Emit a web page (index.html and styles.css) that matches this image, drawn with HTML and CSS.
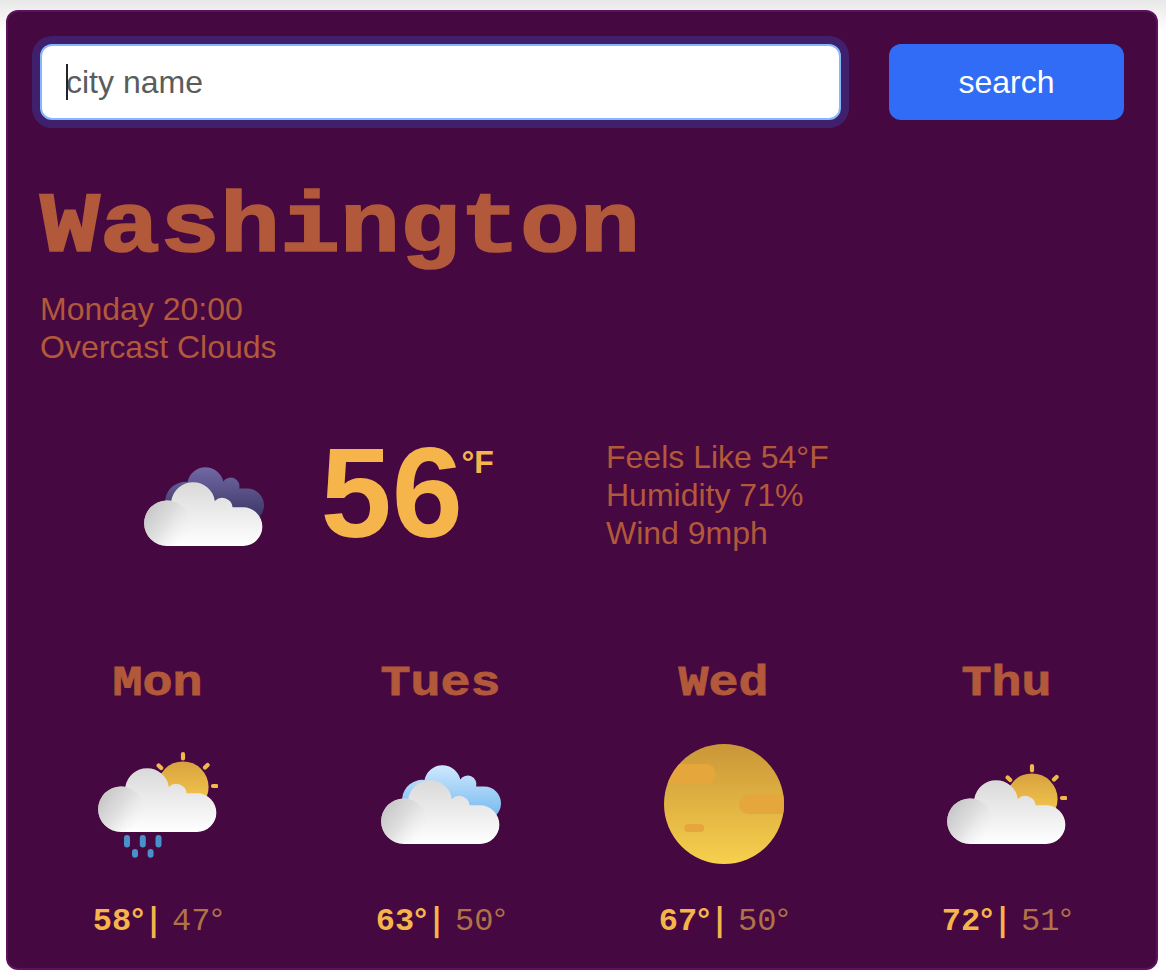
FILE: index.html
```html
<!DOCTYPE html>
<html lang="en">
<head>
<meta charset="utf-8">
<title>Weather</title>
<link rel="stylesheet" href="styles.css">
</head>
<body>
<svg class="defs" width="0" height="0" aria-hidden="true">
  <defs>
    <linearGradient id="cloudFill" x1="0" y1="0" x2="0" y2="1"><stop offset="0" stop-color="#d9d9d9"/><stop offset="1" stop-color="#ffffff"/></linearGradient>
    <linearGradient id="puffFill" x1="0.1" y1="0.15" x2="0.95" y2="0.7"><stop offset="0" stop-color="#c6c6c6"/><stop offset="0.5" stop-color="#d8d8d8" stop-opacity="0.7"/><stop offset="1" stop-color="#efefef" stop-opacity="0"/></linearGradient>
    <linearGradient id="nightFill" x1="0" y1="0" x2="0" y2="1"><stop offset="0" stop-color="#7268a6"/><stop offset="1" stop-color="#37325f"/></linearGradient>
    <linearGradient id="blueFill" x1="0" y1="0" x2="0" y2="1"><stop offset="0" stop-color="#cfe8fe"/><stop offset="1" stop-color="#6fb6ee"/></linearGradient>
    <linearGradient id="sunFill" x1="0" y1="0" x2="0" y2="1"><stop offset="0" stop-color="#d8a140"/><stop offset="1" stop-color="#fbd34f"/></linearGradient>
    <linearGradient id="moonFill" x1="0" y1="0" x2="0" y2="1"><stop offset="0" stop-color="#ca9638"/><stop offset="1" stop-color="#f7d04d"/></linearGradient>
    <clipPath id="moonClip"><circle cx="60" cy="60" r="60"/></clipPath>
    <g id="cloud">
      <path fill="url(#cloudFill)" d="M23 100A22.8 22.8 0 0 1 23 54.4L27.3 54.8A22 22 0 0 1 70.8 55A10.4 10.4 0 0 1 88.6 61.3H99A19.35 19.35 0 0 1 99 100Z"/>
      <circle cx="23" cy="77.2" r="22.8" fill="url(#puffFill)"/>
    </g>
    <path id="back" d="M39 76A19.5 19.5 0 1 1 43.5 36A18.3 18.3 0 0 1 79.3 35.6A8.8 8.8 0 0 1 95.2 42.6H103.3A16.7 16.7 0 0 1 103.3 76Z"/>
    <g id="sun">
      <circle cx="85" cy="55" r="25.6" fill="url(#sunFill)"/>
      <path d="M85 22.2V26.4M107 35.6L109.6 33M115 54H118.4M60.6 33.4L63.2 36" stroke="#f1b94b" stroke-width="4.2" stroke-linecap="round" fill="none"/>
    </g>
  </defs>
</svg>
<main class="card">
  <form class="search">
    <div class="field">
      <input class="city-input" type="text" placeholder="city name" aria-label="City name">
      <span class="caret"></span>
    </div>
    <button class="search-button" type="button">search</button>
  </form>
  <h1 class="city">Washington</h1>
  <div class="summary">Monday 20:00<br>Overcast Clouds</div>
  <section class="current">
    <svg class="icon current-icon" viewBox="0 0 120 120"><use href="#back" fill="url(#nightFill)"/><use href="#cloud"/></svg>
    <div class="temperature">56<span class="unit">°F</span></div>
    <div class="details">Feels Like 54°F<br>Humidity 71%<br>Wind 9mph</div>
  </section>
  <section class="forecast">
    <article class="day">
      <h2 class="day-name">Mon</h2>
      <svg class="icon" viewBox="0 0 120 120"><g transform="translate(0 -12)"><use href="#sun"/><use href="#cloud"/></g><path d="M29 94V100.5M44.8 94V100.5M60.5 94V100.5M37 108V110.7M52.6 108V110.7" stroke="#4a90ca" stroke-width="6" stroke-linecap="round"/></svg>
      <div class="range"><span class="high">58<span class="deg">°</span><span class="bar">|</span></span><span class="deg"> </span><span class="low">47<span class="deg">°</span></span></div>
    </article>
    <article class="day">
      <h2 class="day-name">Tues</h2>
      <svg class="icon" viewBox="0 0 120 120"><use href="#back" fill="url(#blueFill)"/><use href="#cloud"/></svg>
      <div class="range"><span class="high">63<span class="deg">°</span><span class="bar">|</span></span><span class="deg"> </span><span class="low">50<span class="deg">°</span></span></div>
    </article>
    <article class="day">
      <h2 class="day-name">Wed</h2>
      <svg class="icon" viewBox="0 0 120 120"><g clip-path="url(#moonClip)"><rect width="120" height="120" fill="url(#moonFill)"/><g fill="#e5a63c"><rect x="-20" y="20" width="72" height="20" rx="10"/><rect x="75" y="50.5" width="65" height="19.5" rx="9.7"/><rect x="20.3" y="80" width="20" height="8" rx="4"/></g></g></svg>
      <div class="range"><span class="high">67<span class="deg">°</span><span class="bar">|</span></span><span class="deg"> </span><span class="low">50<span class="deg">°</span></span></div>
    </article>
    <article class="day">
      <h2 class="day-name">Thu</h2>
      <svg class="icon" viewBox="0 0 120 120"><use href="#sun"/><use href="#cloud"/></svg>
      <div class="range"><span class="high">72<span class="deg">°</span><span class="bar">|</span></span><span class="deg"> </span><span class="low">51<span class="deg">°</span></span></div>
    </article>
  </section>
</main>
</body>
</html>
```
FILE: styles.css
```css
* { box-sizing: border-box; }
body {
  margin: 0;
  padding: 10px 8px 8px 6px;
  background: #fff linear-gradient(#e8e8e8, #fff) no-repeat 0 0 / 100% 32px;
  font: 32px/38px "Liberation Sans", Arial, sans-serif;
  color: #b1593a;
  overflow: hidden;
}
.defs { position: absolute; }
.card {
  height: 960px;
  padding: 32px;
  border: 2px solid #5c115b;
  border-radius: 12px;
  background: #450840;
}
.search { display: flex; gap: 48px; }
.field { position: relative; flex: 1; }
.city-input {
  display: block;
  width: 100%;
  height: 76px;
  padding: 0 24px;
  border: 2px solid #86b7fe;
  border-radius: 12px;
  background: #fff;
  box-shadow: 0 0 0 8px #40206c;
  font: inherit;
  color: #212529;
  outline: none;
}
.city-input::placeholder { color: #595c5f; opacity: 1; }
.caret {
  position: absolute;
  left: 26px;
  top: 20px;
  width: 2px;
  height: 36px;
  background: #212529;
}
.search-button {
  width: 235px;
  height: 76px;
  padding: 0;
  border: 0;
  border-radius: 12px;
  background: #306cf5;
  color: #fff;
  font: inherit;
}
.city {
  margin: 46px 0 4px;
  font: bold 100px/120px "Liberation Mono", "Courier New", monospace;
  -webkit-text-stroke: 2px #b1593a;
  transform: scaleY(0.85);
  transform-origin: 0 78px;
}
.current {
  display: flex;
  align-items: flex-start;
  height: 222px;
  margin-top: 64px;
}
.icon { display: block; width: 120px; height: 120px; }
.current-icon { margin: 16px 57px 0 103.5px; }
.temperature {
  display: flex;
  width: 285.5px;
  margin-top: -1px;
  color: #f5b54b;
  font-size: 128px;
  font-weight: bold;
  line-height: 128px;
}
.unit { margin: 14px 0 0 -1.5px; font-size: 32px; line-height: 38px; }
.details { margin-top: 8px; }
.forecast {
  display: grid;
  grid-template-columns: repeat(4, 1fr);
  margin: 0 -24px;
}
.day { display: flex; flex-direction: column; align-items: center; }
.day-name {
  margin: 0 0 32px;
  font: bold 50px/60px "Liberation Mono", "Courier New", monospace;
  -webkit-text-stroke: 1px #b1593a;
  transform: scaleY(0.85);
  transform-origin: 0 43px;
}
.range {
  height: 38px;
  margin-top: 36px;
  padding-left: 1px;
  white-space: pre;
  font-family: "Liberation Mono", "Courier New", monospace;
  color: #f5b54b;
}
.high { font-weight: bold; }
.low { color: #b07247; }
.deg { font-family: "Liberation Sans", Arial, sans-serif; }
.bar { font-family: "DejaVu Sans Mono", monospace; line-height: 1; }
```
